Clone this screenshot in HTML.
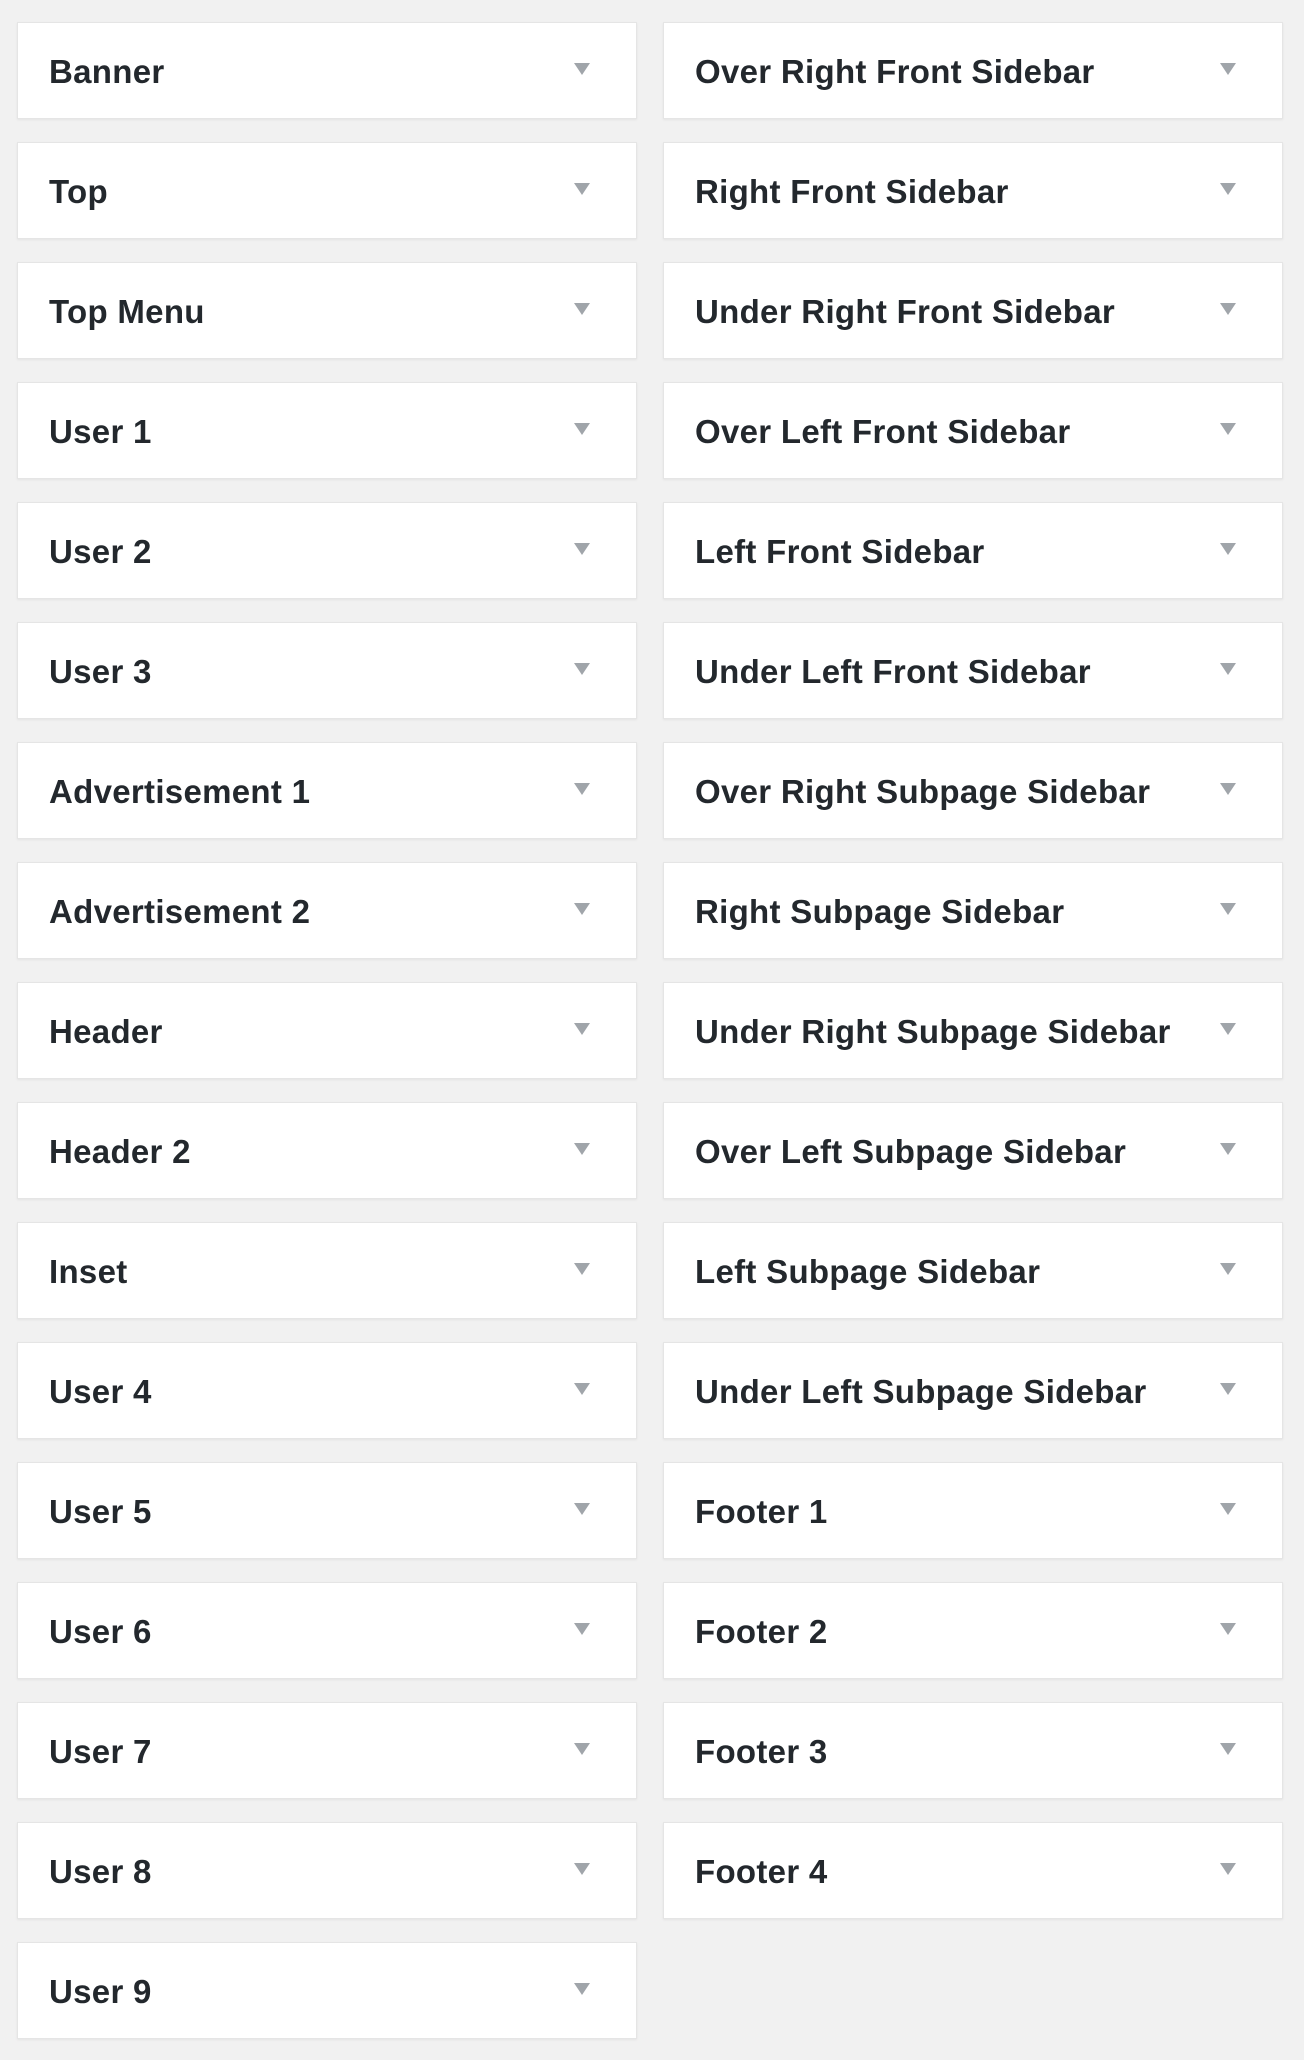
<!DOCTYPE html>
<html><head><meta charset="utf-8"><style>
html,body{margin:0;padding:0;background:#f1f1f1;width:1304px;height:2060px;overflow:hidden}
.b{position:absolute;height:95px;background:#fff;border:1px solid #e5e5e5;box-shadow:0 1px 2px rgba(0,0,0,.06);box-sizing:content-box}
.b span{position:absolute;left:31px;top:29px;font:bold 33px/40px "Liberation Sans",sans-serif;letter-spacing:0.3px;color:#23282d;white-space:nowrap}
.b i{position:absolute;left:556px;top:40px;width:0;height:0;border-left:8px solid transparent;border-right:8px solid transparent;border-top:12px solid #a0a5aa}
.l{left:17px;width:618px}
.r{left:663px;width:618px}
</style></head><body>
<div class="b l" style="top:22px"><span>Banner</span><i></i></div>
<div class="b l" style="top:142px"><span>Top</span><i></i></div>
<div class="b l" style="top:262px"><span>Top Menu</span><i></i></div>
<div class="b l" style="top:382px"><span>User 1</span><i></i></div>
<div class="b l" style="top:502px"><span>User 2</span><i></i></div>
<div class="b l" style="top:622px"><span>User 3</span><i></i></div>
<div class="b l" style="top:742px"><span>Advertisement 1</span><i></i></div>
<div class="b l" style="top:862px"><span>Advertisement 2</span><i></i></div>
<div class="b l" style="top:982px"><span>Header</span><i></i></div>
<div class="b l" style="top:1102px"><span>Header 2</span><i></i></div>
<div class="b l" style="top:1222px"><span>Inset</span><i></i></div>
<div class="b l" style="top:1342px"><span>User 4</span><i></i></div>
<div class="b l" style="top:1462px"><span>User 5</span><i></i></div>
<div class="b l" style="top:1582px"><span>User 6</span><i></i></div>
<div class="b l" style="top:1702px"><span>User 7</span><i></i></div>
<div class="b l" style="top:1822px"><span>User 8</span><i></i></div>
<div class="b l" style="top:1942px"><span>User 9</span><i></i></div>
<div class="b r" style="top:22px"><span>Over Right Front Sidebar</span><i></i></div>
<div class="b r" style="top:142px"><span>Right Front Sidebar</span><i></i></div>
<div class="b r" style="top:262px"><span>Under Right Front Sidebar</span><i></i></div>
<div class="b r" style="top:382px"><span>Over Left Front Sidebar</span><i></i></div>
<div class="b r" style="top:502px"><span>Left Front Sidebar</span><i></i></div>
<div class="b r" style="top:622px"><span>Under Left Front Sidebar</span><i></i></div>
<div class="b r" style="top:742px"><span>Over Right Subpage Sidebar</span><i></i></div>
<div class="b r" style="top:862px"><span>Right Subpage Sidebar</span><i></i></div>
<div class="b r" style="top:982px"><span>Under Right Subpage Sidebar</span><i></i></div>
<div class="b r" style="top:1102px"><span>Over Left Subpage Sidebar</span><i></i></div>
<div class="b r" style="top:1222px"><span>Left Subpage Sidebar</span><i></i></div>
<div class="b r" style="top:1342px"><span>Under Left Subpage Sidebar</span><i></i></div>
<div class="b r" style="top:1462px"><span>Footer 1</span><i></i></div>
<div class="b r" style="top:1582px"><span>Footer 2</span><i></i></div>
<div class="b r" style="top:1702px"><span>Footer 3</span><i></i></div>
<div class="b r" style="top:1822px"><span>Footer 4</span><i></i></div>
</body></html>
